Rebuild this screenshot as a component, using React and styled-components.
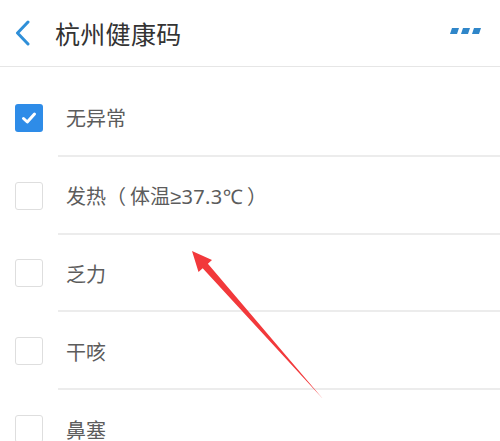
import React from "react";
import styled, { createGlobalStyle } from "styled-components";

const Global = createGlobalStyle`
  body {
    margin: 0;
    background: #fff;
    font-family: "Noto Sans CJK SC", "Noto Sans", sans-serif;
  }
`;

const Latin = styled.span`
  font-family: "Noto Sans", sans-serif;
  letter-spacing: 0.4px;
`;

const Inner = styled.span`
  margin: 0 4px;
`;

const items = [
  { label: "无异常", checked: true },
  {
    label: (
      <>
        发热（<Inner>体温<Latin>≥37.3℃</Latin></Inner>）
      </>
    ),
    key: "fever",
  },
  { label: "乏力" },
  { label: "干咳" },
  { label: "鼻塞" },
];

const App = () => {
  return (
    <Page>
      <Global />
      <Header>
        <Back>
          <svg width="16" height="26" viewBox="0 0 16 26">
            <path d="M13 2 L2.5 13 L13 24" fill="none" stroke="#2f8fd8" strokeWidth="3" strokeLinecap="round" strokeLinejoin="round" />
          </svg>
        </Back>
        <Title>杭州健康码</Title>
        <More>
          <svg width="32" height="8" viewBox="0 0 32 8">
            <polygon points="2,0 9,0 7,6 0,6" fill="#2f86c9" />
            <polygon points="13,0 20,0 18,6 11,6" fill="#2f86c9" />
            <polygon points="24,0 31,0 29,6 22,6" fill="#2f86c9" />
          </svg>
        </More>
      </Header>
      <List>
        {items.map((it) => (
          <Row key={it.key || it.label}>
            <Box $checked={it.checked}>
              {it.checked && (
                <svg width="18" height="18" viewBox="0 0 18 18">
                  <path d="M3.5 9.5 L7.3 13 L14.5 5" fill="none" stroke="#fff" strokeWidth="3" strokeLinecap="round" strokeLinejoin="round" />
                </svg>
              )}
            </Box>
            <Label>{it.label}</Label>
          </Row>
        ))}
      </List>
      <Arrow width="500" height="441" viewBox="0 0 500 441">
        <polygon
          points="192,251 212,260 207.9,263.7 323,399 202.7,268.3 198.5,272"
          fill="#f2393b"
        />
      </Arrow>
    </Page>
  );
};

const Page = styled.div`
  position: relative;
  width: 500px;
  height: 441px;
  overflow: hidden;
  background: #fff;
`;

const Header = styled.div`
  height: 66px;
  display: flex;
  align-items: center;
  border-bottom: 1.5px solid #e6e6e6;
  padding: 0 16px 0 15px;
`;

const Back = styled.div`
  width: 40px;
  display: flex;
  align-items: center;
  margin-top: -1px;
`;

const Title = styled.div`
  font-size: 25px;
  color: #333;
  letter-spacing: 0.3px;
  flex: 1;
`;

const More = styled.div`
  display: flex;
  align-items: center;
  margin-right: 2px;
  margin-top: -2px;
`;

const List = styled.div`
  padding-top: 12px;
`;

const Row = styled.div`
  height: 77.8px;
  display: flex;
  align-items: center;
  position: relative;
  &::after {
    content: "";
    position: absolute;
    left: 58px;
    right: 0;
    bottom: 0;
    height: 2px;
    background: #ececec;
  }
`;

const Box = styled.div`
  width: 28px;
  height: 28px;
  box-sizing: border-box;
  margin-left: 15px;
  border-radius: 3px;
  display: flex;
  align-items: center;
  justify-content: center;
  background: ${(p) => (p.$checked ? "#2e8ce8" : "#fff")};
  border: ${(p) => (p.$checked ? "none" : "1.5px solid #dedede")};
`;

const Label = styled.div`
  margin-left: 23px;
  font-size: 20px;
  color: #5c5c5c;
  white-space: nowrap;
`;

const Arrow = styled.svg`
  position: absolute;
  left: 0;
  top: 0;
  pointer-events: none;
`;

export default App;
